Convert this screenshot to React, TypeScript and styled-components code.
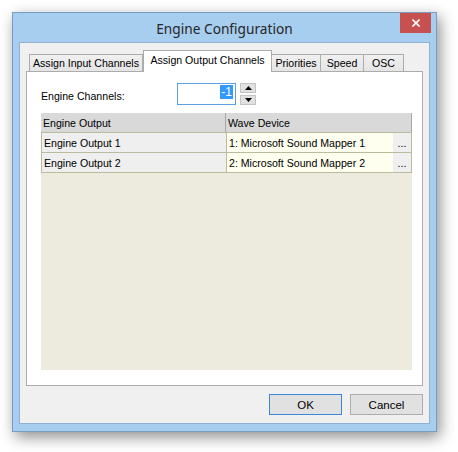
import styled, { createGlobalStyle } from "styled-components";

const GlobalStyle = createGlobalStyle`
  html, body {
    margin: 0;
    padding: 0;
    background: #ffffff;
  }
  body {
    font-family: "Liberation Sans", Arial, sans-serif;
    font-size: 10.6px;
    color: #000;
  }
`;

const Page = styled.div`
  width: 458px;
  height: 452px;
  padding: 12px 0 0 12px;
  box-sizing: border-box;
`;

const Window = styled.div`
  width: 425px;
  height: 420px;
  box-sizing: border-box;
  background: #a7cdef;
  border: 1px solid #7b9cbf;
  box-shadow: 3px 5px 14px rgba(0, 0, 0, 0.45);
  display: flex;
  flex-direction: column;
`;

const TitleBar = styled.div`
  height: 29px;
  position: relative;
  display: flex;
  align-items: center;
  justify-content: center;
`;

const Title = styled.div`
  font-family: "Noto Sans", "Open Sans", sans-serif;
  font-size: 13.7px;
  color: #262626;
  padding-top: 1px;
`;

const CloseButton = styled.div`
  position: absolute;
  top: 0;
  right: 5px;
  width: 31px;
  height: 20px;
  background: #c75050;
  display: flex;
  align-items: center;
  justify-content: center;
`;

const Client = styled.div`
  flex: 1;
  margin: 0 6px 7px 6px;
  background: #f0f0f0;
  border: 1px solid #8fb1d3;
  display: flex;
  flex-direction: column;
  padding: 7px 6px 8px 6px;
`;

const TabStrip = styled.div`
  display: flex;
  align-items: flex-end;
  height: 22px;
  padding-left: 3px;
  margin-bottom: -1px;
  position: relative;
  z-index: 1;
`;

const Tab = styled.div<{ $w: number; $active?: boolean }>`
  width: ${(p) => p.$w}px;
  box-sizing: border-box;
  height: ${(p) => (p.$active ? 22 : 18)}px;
  border: 1px solid #acacac;
  border-bottom: ${(p) => (p.$active ? "none" : "1px solid #acacac")};
  border-left: ${(p) => (p.$active ? "1px solid #acacac" : "none")};
  background: ${(p) =>
    p.$active ? "#ffffff" : "linear-gradient(#f0f0f0, #e5e5e5)"};
  position: relative;
  z-index: ${(p) => (p.$active ? 2 : 1)};
  display: flex;
  align-items: ${(p) => (p.$active ? "flex-start" : "center")};
  justify-content: center;
  padding-top: ${(p) => (p.$active ? "3px" : "0")};
  white-space: nowrap;

  &:first-child {
    border-left: 1px solid #acacac;
  }
`;

const TabPage = styled.div`
  flex: 1;
  background: #ffffff;
  border: 1px solid #acacac;
  display: flex;
  flex-direction: column;
  padding: 11px 10px 15px 14px;
`;

const FieldRow = styled.div`
  display: flex;
  align-items: center;
  height: 22px;
`;

const FieldLabel = styled.div`
  width: 136px;
  padding-top: 3px;
`;

const SpinInput = styled.div`
  width: 59px;
  height: 22px;
  box-sizing: border-box;
  border: 1px solid #5b9fe6;
  display: flex;
  justify-content: flex-end;
  align-items: flex-start;
  padding: 1px 2px 0 0;
`;

const Selected = styled.span`
  background: #3399ff;
  color: #ffffff;
  font-size: 12px;
  line-height: 14px;
  padding: 0 1px;
`;

const SpinButtons = styled.div`
  display: flex;
  flex-direction: column;
  gap: 2px;
  margin-left: 4px;
`;

const SpinButton = styled.div`
  width: 16px;
  height: 10px;
  box-sizing: border-box;
  background: #e1e1e1;
  border: 1px solid #c4c4c4;
  display: flex;
  align-items: center;
  justify-content: center;
`;

const Grid = styled.div`
  flex: 1;
  margin-top: 8px;
  background: #ecebdd;
  display: flex;
  flex-direction: column;
`;

const HeaderRow = styled.div`
  display: grid;
  grid-template-columns: 184px 1fr;
  height: 19px;
  background: #d9d9d9;
  border-right: 1px solid #a8a8a8;
`;

const HeaderCell = styled.div`
  padding-left: 2px;
  display: flex;
  align-items: center;
  & + & {
    border-left: 1px solid #a8a8a8;
  }
`;

const DataRow = styled.div`
  display: grid;
  grid-template-columns: 184px 1fr 18px;
  height: 19px;
  border: 1px solid #bbbb9d;
  border-bottom: none;
  &:last-child {
    border-bottom: 1px solid #bbbb9d;
  }
`;

const Cell = styled.div<{ $kind?: "name" | "value" | "button" }>`
  display: flex;
  align-items: center;
  padding-left: ${(p) => (p.$kind === "button" ? "0" : "2px")};
  justify-content: ${(p) => (p.$kind === "button" ? "center" : "flex-start")};
  background: ${(p) => (p.$kind === "value" ? "#fffff0" : "#efefef")};
  border-left: ${(p) => (p.$kind === "value" ? "1px solid #bbbb9d" : "none")};
  white-space: nowrap;
`;

const Rows = styled.div`
  display: flex;
  flex-direction: column;
`;

const ButtonBar = styled.div`
  display: flex;
  justify-content: flex-end;
  gap: 8px;
  padding-top: 8px;
`;

const DialogButton = styled.div<{ $default?: boolean }>`
  width: 73px;
  height: 21px;
  box-sizing: border-box;
  background: #e1e1e1;
  border: 1px solid ${(p) => (p.$default ? "#3c88d8" : "#adadad")};
  display: flex;
  align-items: center;
  justify-content: center;
  font-size: 11.5px;
`;

const Triangle = ({ up }: { up?: boolean }) => (
  <svg width="7" height="4" viewBox="0 0 7 4">
    <polygon points={up ? "0,4 7,4 3.5,0" : "0,0 7,0 3.5,4"} fill="#000" />
  </svg>
);

const rows = [
  { name: "Engine Output 1", device: "1: Microsoft Sound Mapper 1" },
  { name: "Engine Output 2", device: "2: Microsoft Sound Mapper 2" },
];

const App = () => {
  return (
    <>
      <GlobalStyle />
      <Page>
        <Window>
          <TitleBar>
            <Title>Engine Configuration</Title>
            <CloseButton>
              <svg width="8" height="8" viewBox="0 0 8 8">
                <path d="M0.5 0.5 L7.5 7.5 M7.5 0.5 L0.5 7.5" stroke="#fff" strokeWidth="1.6" />
              </svg>
            </CloseButton>
          </TitleBar>
          <Client>
            <TabStrip>
              <Tab $w={114}>Assign Input Channels</Tab>
              <Tab $w={129} $active>
                Assign Output Channels
              </Tab>
              <Tab $w={49}>Priorities</Tab>
              <Tab $w={43}>Speed</Tab>
              <Tab $w={40}>OSC</Tab>
            </TabStrip>
            <TabPage>
              <FieldRow>
                <FieldLabel>Engine Channels:</FieldLabel>
                <SpinInput>
                  <Selected>-1</Selected>
                </SpinInput>
                <SpinButtons>
                  <SpinButton>
                    <Triangle up />
                  </SpinButton>
                  <SpinButton>
                    <Triangle />
                  </SpinButton>
                </SpinButtons>
              </FieldRow>
              <Grid>
                <HeaderRow>
                  <HeaderCell>Engine Output</HeaderCell>
                  <HeaderCell>Wave Device</HeaderCell>
                </HeaderRow>
                <Rows>
                  {rows.map((r) => (
                    <DataRow key={r.name}>
                      <Cell $kind="name">{r.name}</Cell>
                      <Cell $kind="value">{r.device}</Cell>
                      <Cell $kind="button">...</Cell>
                    </DataRow>
                  ))}
                </Rows>
              </Grid>
            </TabPage>
            <ButtonBar>
              <DialogButton $default>OK</DialogButton>
              <DialogButton>Cancel</DialogButton>
            </ButtonBar>
          </Client>
        </Window>
      </Page>
    </>
  );
};

export default App;
